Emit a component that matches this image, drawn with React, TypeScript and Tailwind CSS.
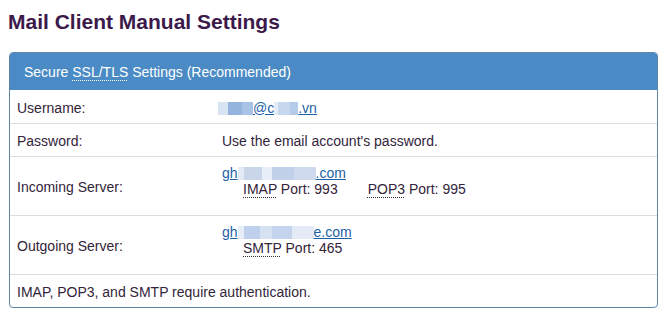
const font = { fontFamily: '"Liberation Sans", Arial, Helvetica, sans-serif' };

function Smudge({ widths }: { widths: { w: number; c: string }[] }) {
  return (
    <span className="inline-flex h-[13px] align-[-2px]">
      {widths.map((b, i) => (
        <span key={i} className="h-full inline-block" style={{ width: b.w, background: b.c }} />
      ))}
    </span>
  );
}

function Abbr({ children }: { children: React.ReactNode }) {
  return <span className="underline decoration-dotted underline-offset-[3px] decoration-1">{children}</span>;
}

function Row({
  label,
  children,
  h,
  top = false,
}: {
  label: string;
  children: React.ReactNode;
  h: string;
  top?: boolean;
}) {
  return (
    <div className={`flex border-b border-[#dddddd] ${h}`}>
      <div className="w-[212px] pl-[7px] flex items-center pt-[2px]">{label}</div>
      <div className={`flex-1 flex ${top ? "items-start pt-[8px]" : "items-center pt-[2px]"}`}>{children}</div>
    </div>
  );
}

export default function App() {
  return (
    <div className="bg-white w-[668px] h-[316px] text-[14px] leading-[16px] text-[#33243a]" style={font}>
      <h1 className="pt-[10px] pl-[8px] text-[21px] leading-[24px] font-bold text-[#3b1a4a]">
        Mail Client Manual Settings
      </h1>

      <div className="mt-[18px] ml-[9px] w-[649px] border border-[#5f87ab] rounded-[4px] overflow-hidden">
        <div className="h-[37px] bg-[#4b8bc5] text-white flex items-center pl-[14px] pt-[1px]">
          Secure&nbsp;<Abbr>SSL/TLS</Abbr>&nbsp;Settings (Recommended)
        </div>

        <Row label="Username:" h="h-[34px]">
          <span className="-ml-[4px] text-[#1d5fa6]">
            <Smudge
              widths={[
                { w: 10, c: "#d9e4f3" },
                { w: 14, c: "#94b3dd" },
                { w: 11, c: "#a9c3e6" },
              ]}
            />
            <span className="underline">
              @c
              <Smudge
                widths={[
                  { w: 4, c: "#e4ecf7" },
                  { w: 12, c: "#c7d7ee" },
                  { w: 8, c: "#b5cbea" },
                ]}
              />
              .vn
            </span>
          </span>
        </Row>

        <Row label="Password:" h="h-[33px]">
          Use the email account's password.
        </Row>

        <Row label="Incoming Server:" h="h-[59px]" top>
          <div>
            <div className="text-[#1d5fa6] underline">
              gh
              <Smudge
                widths={[
                  { w: 6, c: "#e3eaf5" },
                  { w: 18, c: "#c9d6ea" },
                  { w: 10, c: "#e8eef7" },
                  { w: 22, c: "#c2d1ea" },
                  { w: 22, c: "#cfdaee" },
                ]}
              />
              .com
            </div>
            <div className="pl-[21px]">
              <Abbr>IMAP</Abbr> Port: 993
              <span className="ml-[30px]">
                <Abbr>POP3</Abbr> Port: 995
              </span>
            </div>
          </div>
        </Row>

        <Row label="Outgoing Server:" h="h-[59px]" top>
          <div>
            <div className="text-[#1d5fa6] underline">
              gh
              <Smudge
                widths={[
                  { w: 6, c: "#e6edf7" },
                  { w: 16, c: "#bfd0ec" },
                  { w: 12, c: "#d6e1f2" },
                  { w: 20, c: "#c4d4ed" },
                  { w: 22, c: "#e4ebf6" },
                ]}
              />
              e.com
            </div>
            <div className="pl-[21px]">
              <Abbr>SMTP</Abbr> Port: 465
            </div>
          </div>
        </Row>

        <div className="h-[32px] flex items-center pl-[7px] pt-[2px]">
          IMAP, POP3, and SMTP require authentication.
        </div>
      </div>
    </div>
  );
}
